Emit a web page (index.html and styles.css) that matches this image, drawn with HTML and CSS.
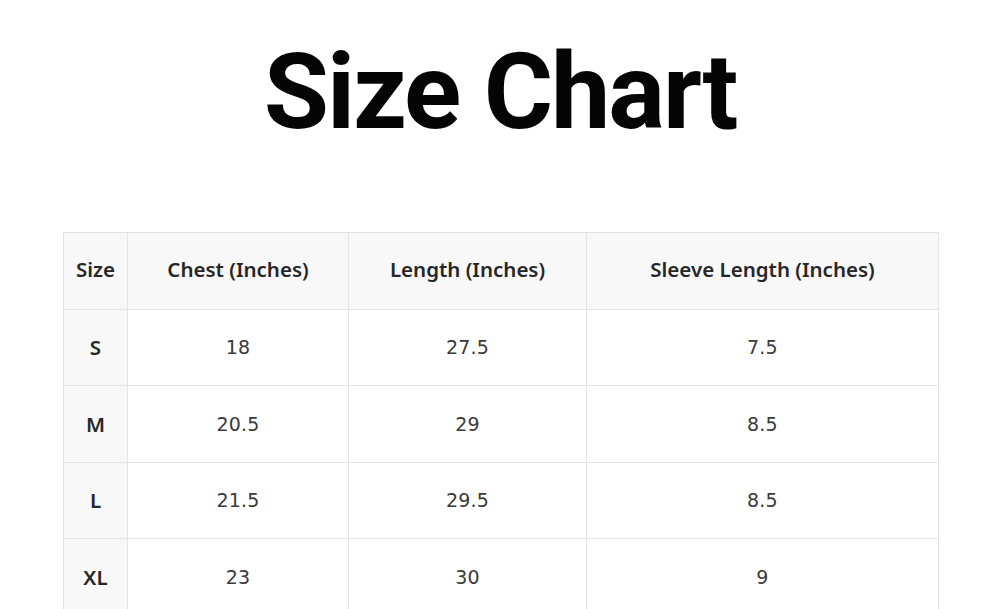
FILE: index.html
```html
<!DOCTYPE html>
<html>
<head>
<meta charset="utf-8">
<link rel="stylesheet" href="styles.css">
</head>
<body>
<h1 class="title">Size Chart</h1>
<table class="chart">
  <colgroup>
    <col class="c-size"><col class="c-chest"><col class="c-length"><col class="c-sleeve">
  </colgroup>
  <thead>
    <tr><th>Size</th><th>Chest (Inches)</th><th>Length (Inches)</th><th>Sleeve Length (Inches)</th></tr>
  </thead>
  <tbody>
    <tr><th>S</th><td>18</td><td>27.5</td><td>7.5</td></tr>
    <tr><th>M</th><td>20.5</td><td>29</td><td>8.5</td></tr>
    <tr><th>L</th><td>21.5</td><td>29.5</td><td>8.5</td></tr>
    <tr><th>XL</th><td>23</td><td>30</td><td>9</td></tr>
  </tbody>
</table>
</body>
</html>
```
FILE: styles.css
```css
html, body {
  margin: 0;
  padding: 0;
  background: #ffffff;
  overflow: hidden;
}
body {
  height: 609px;
}
.title {
  margin: 39px 0 0 0;
  font-family: Roboto, "Liberation Sans", sans-serif;
  font-weight: 700;
  font-size: 106px;
  line-height: 1;
  text-align: center;
  color: #050505;
  letter-spacing: -2px;
}
.chart {
  margin: 87px 0 0 63px;
  border-collapse: collapse;
  table-layout: fixed;
  width: 875px;
}
.c-size { width: 64px; }
.c-chest { width: 221px; }
.c-length { width: 238px; }
.c-sleeve { width: 352px; }
.chart th, .chart td {
  border: 1px solid #e4e4e4;
  height: 75.5px;
  padding: 0;
  text-align: center;
  vertical-align: middle;
}
.chart th {
  font-family: "Noto Sans", sans-serif;
  font-weight: 600;
  font-size: 20.5px;
  color: #262626;
  background: #f8f8f8;
  letter-spacing: 0;
}
.chart thead th {
  padding-bottom: 3px;
  height: 72.5px;
}
.chart td {
  font-family: "DejaVu Sans", sans-serif;
  font-weight: 400;
  font-size: 19px;
  color: #3a3a3a;
  background: #ffffff;
  letter-spacing: 0.2px;
}
```
